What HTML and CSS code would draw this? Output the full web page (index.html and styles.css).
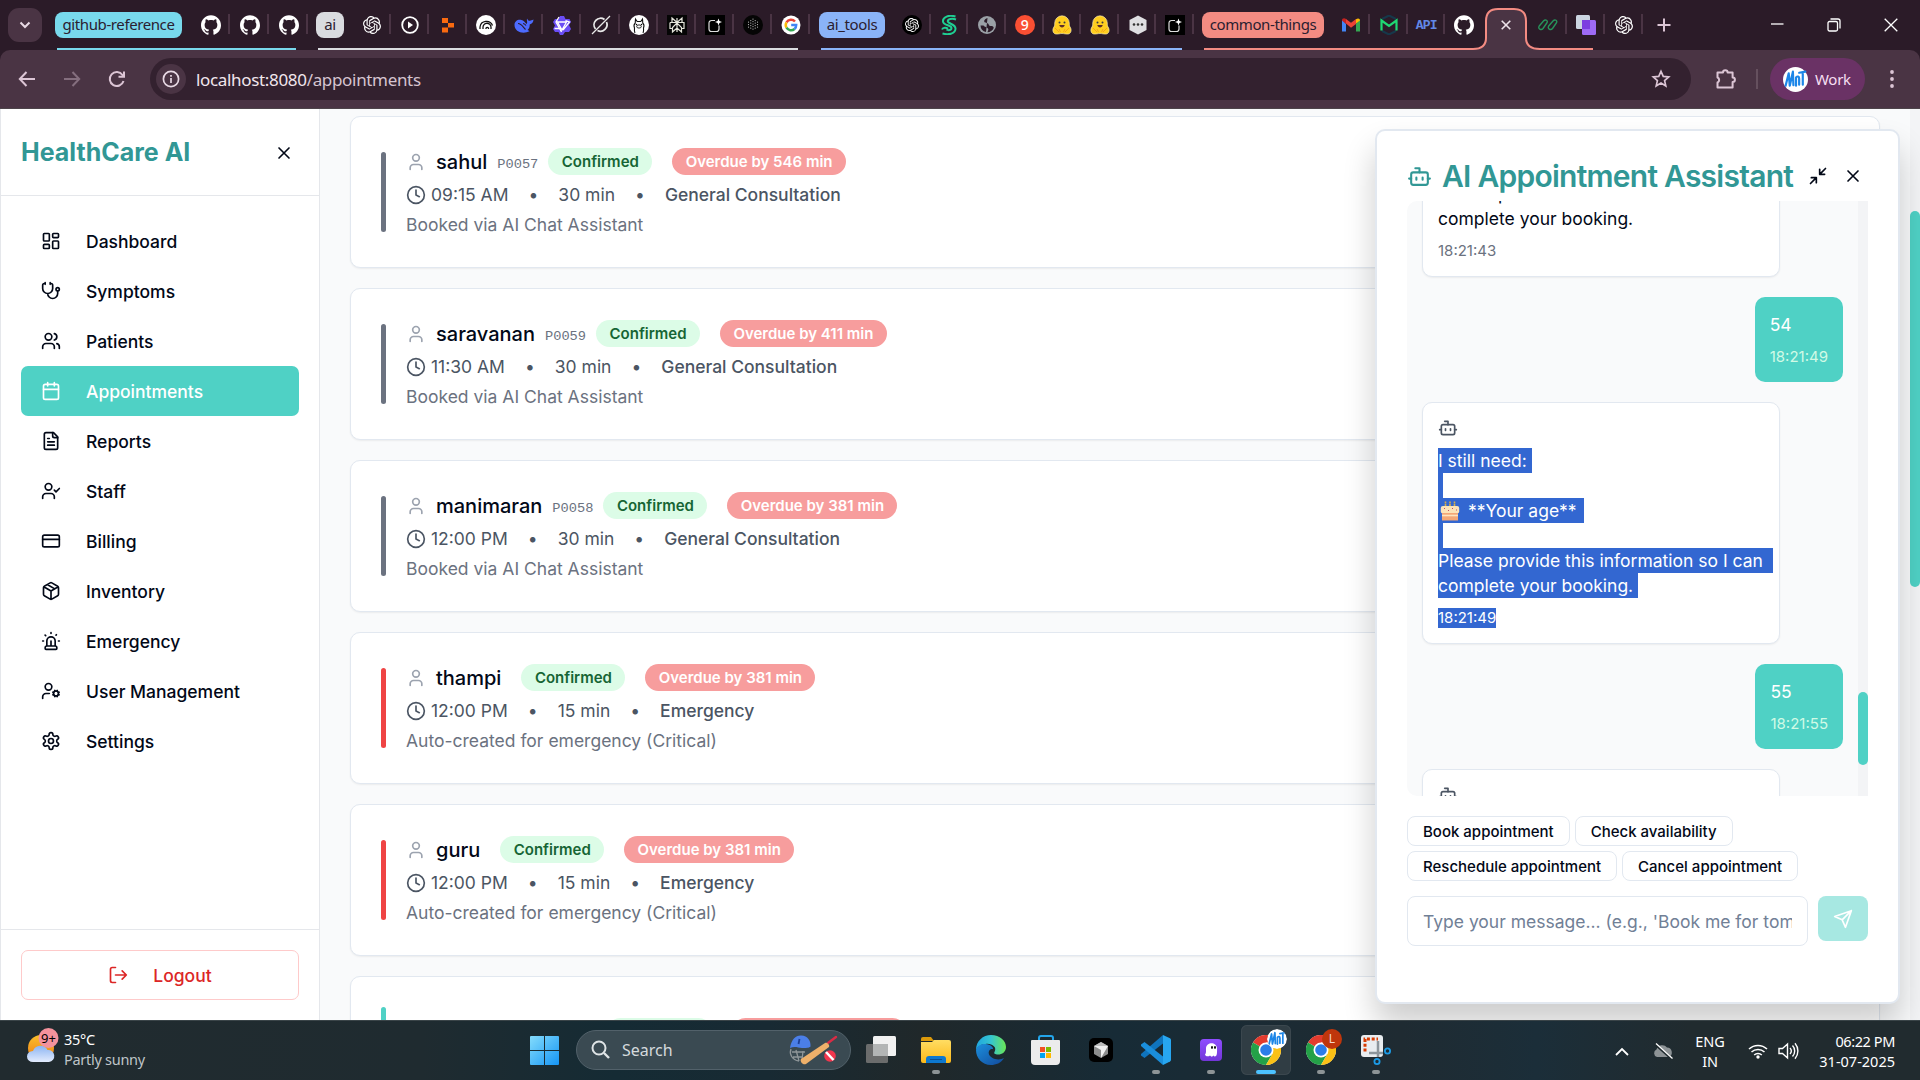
FILE: index.html
```html
<!DOCTYPE html>
<html lang="en">
<head>
<meta charset="utf-8">
<title>HealthCare AI - Appointments</title>
<link rel="stylesheet" href="styles.css">
</head>
<body>
<svg class="defs" width="0" height="0">
<defs>
<linearGradient id="gwin" x1="0" y1="0" x2="1" y2="1"><stop offset="0" stop-color="#84dcfc"/><stop offset="1" stop-color="#1595f5"/></linearGradient>
<linearGradient id="gfold" x1="0" y1="0" x2="0" y2="1"><stop offset="0" stop-color="#ffdd63"/><stop offset="1" stop-color="#fcb919"/></linearGradient>
<linearGradient id="gedge" x1="0" y1="0" x2="1" y2="0"><stop offset="0" stop-color="#1fa5df"/><stop offset=".5" stop-color="#35c5d0"/><stop offset="1" stop-color="#6be655"/></linearGradient>
<linearGradient id="gedge2" x1="0" y1="0" x2="1" y2="1"><stop offset="0" stop-color="#1c8fdc"/><stop offset="1" stop-color="#124a9c"/></linearGradient>
<linearGradient id="gsun" x1="0" y1="0" x2="0" y2="1"><stop offset="0" stop-color="#fbc02a"/><stop offset="1" stop-color="#ec7a17"/></linearGradient>
<linearGradient id="gcloud" x1="0" y1="0" x2="0" y2="1"><stop offset="0" stop-color="#8cb4f2"/><stop offset="1" stop-color="#e3ecfd"/></linearGradient>
<linearGradient id="gghost" x1="0" y1="0" x2="0" y2="1"><stop offset="0" stop-color="#8f4dff"/><stop offset="1" stop-color="#7236d8"/></linearGradient>
</defs>
<symbol id="github" viewBox="0 0 24 24"><path fill="currentColor" d="M12 .297c-6.63 0-12 5.373-12 12 0 5.303 3.438 9.8 8.205 11.385.6.113.82-.258.82-.577 0-.285-.01-1.04-.015-2.04-3.338.724-4.042-1.61-4.042-1.61C4.422 18.07 3.633 17.7 3.633 17.7c-1.087-.744.084-.729.084-.729 1.205.084 1.838 1.236 1.838 1.236 1.07 1.835 2.809 1.305 3.495.998.108-.776.417-1.305.76-1.605-2.665-.3-5.466-1.332-5.466-5.93 0-1.31.465-2.38 1.235-3.22-.135-.303-.54-1.523.105-3.176 0 0 1.005-.322 3.3 1.23.96-.267 1.98-.399 3-.405 1.02.006 2.04.138 3 .405 2.28-1.552 3.285-1.23 3.285-1.23.645 1.653.24 2.873.12 3.176.765.84 1.23 1.91 1.23 3.22 0 4.61-2.805 5.625-5.475 5.92.42.36.81 1.096.81 2.22 0 1.606-.015 2.896-.015 3.286 0 .315.21.69.825.57C20.565 22.092 24 17.592 24 12.297c0-6.627-5.373-12-12-12"/></symbol>
<symbol id="openai" viewBox="0 0 24 24"><path fill="currentColor" d="M22.2819 9.8211a5.9847 5.9847 0 0 0-.5157-4.9108 6.0462 6.0462 0 0 0-6.5098-2.9A6.0651 6.0651 0 0 0 4.9807 4.1818a5.9847 5.9847 0 0 0-3.9977 2.9 6.0462 6.0462 0 0 0 .7427 7.0966 5.98 5.98 0 0 0 .511 4.9107 6.051 6.051 0 0 0 6.5146 2.9001A5.9847 5.9847 0 0 0 13.2599 24a6.0557 6.0557 0 0 0 5.7718-4.2058 5.9894 5.9894 0 0 0 3.9977-2.9001 6.0557 6.0557 0 0 0-.7475-7.0729zm-9.022 12.6081a4.4755 4.4755 0 0 1-2.8764-1.0408l.1419-.0804 4.7783-2.7582a.7948.7948 0 0 0 .3927-.6813v-6.7369l2.02 1.1686a.071.071 0 0 1 .038.052v5.5826a4.504 4.504 0 0 1-4.4945 4.4944zm-9.6607-4.1254a4.4708 4.4708 0 0 1-.5346-3.0137l.142.0852 4.783 2.7582a.7712.7712 0 0 0 .7806 0l5.8428-3.3685v2.3324a.0804.0804 0 0 1-.0332.0615L9.74 19.9502a4.4992 4.4992 0 0 1-6.1408-1.6464zM2.3408 7.8956a4.485 4.485 0 0 1 2.3655-1.9728V11.6a.7664.7664 0 0 0 .3879.6765l5.8144 3.3543-2.0201 1.1685a.0757.0757 0 0 1-.071 0l-4.8303-2.7865A4.504 4.504 0 0 1 2.3408 7.872zm16.5963 3.8558L13.1038 8.364 15.1192 7.2a.0757.0757 0 0 1 .071 0l4.8303 2.7913a4.4944 4.4944 0 0 1-.6765 8.1042v-5.6772a.79.79 0 0 0-.407-.667zm2.0107-3.0231l-.142-.0852-4.7735-2.7818a.7759.7759 0 0 0-.7854 0L9.409 9.2297V6.8974a.0662.0662 0 0 1 .0284-.0615l4.8303-2.7866a4.4992 4.4992 0 0 1 6.6802 4.66zM8.3065 12.863l-2.02-1.1638a.0804.0804 0 0 1-.038-.0567V6.0742a4.4992 4.4992 0 0 1 7.3757-3.4537l-.142.0805L8.704 5.459a.7948.7948 0 0 0-.3927.6813zm1.0976-2.3654l2.602-1.4998 2.6069 1.4998v2.9994l-2.5974 1.4997-2.6067-1.4997Z"/></symbol>
<symbol id="spark" viewBox="0 0 20 20"><path d="M0 0h20v20H0z" fill="#000"/><path d="M10 5.500H6.500a2.500 2.500 0 0 0-2.500 2.500v6a2.500 2.500 0 0 0 2.500 2.500h5a2.500 2.500 0 0 0 2.500-2.500v-3.500" fill="none" stroke="#ddd" stroke-width="1.200"/><path d="M13.500 3.500l.9 2.600 2.600.9-2.600.9-.9 2.600-.9-2.600-2.600-.9 2.600-.9z" fill="#fff"/></symbol>
<symbol id="hug" viewBox="0 0 20 20"><path d="M10 .8a7.300 7.300 0 0 1 7.300 7.300c0 1.500 0 2.900.8 3.900 1.800 2.500 1.200 6.500-1.800 7-2 .4-4.300-.5-6.300-.5s-4.300.9-6.300.5c-3-.5-3.600-4.500-1.800-7 .8-1 .8-2.400.8-3.900A7.300 7.300 0 0 1 10 .8z" fill="#ffce1f" stroke="#fff3c4" stroke-width=".6"/><circle cx="7.500" cy="7.500" r="1" fill="#3a3b45"/><circle cx="12.500" cy="7.500" r="1" fill="#3a3b45"/><path d="M7.300 10h5.400c-.3 3.300-5 3.300-5.400 0z" fill="#5c2d2a"/><path d="M3 13l4 4M17 13l-4 4M7 14l1.500 3M13 14l-1.500 3" stroke="#f09a1a" stroke-width=".8"/></symbol>
<symbol id="x" viewBox="0 0 24 24"><path d="M18 6 6 18M6 6l12 12"/></symbol>
<symbol id="user" viewBox="0 0 24 24"><path d="M19 21v-2a4 4 0 0 0-4-4H9a4 4 0 0 0-4 4v2"/><circle cx="12" cy="7" r="4"/></symbol>
<symbol id="clock" viewBox="0 0 24 24"><circle cx="12" cy="12" r="10"/><path d="M12 6v6l4 2"/></symbol>
<symbol id="bot" viewBox="0 0 24 24"><path d="M12 8V4H8"/><rect width="16" height="12" x="4" y="8" rx="2"/><path d="M2 14h2M20 14h2M15 13v2M9 13v2"/></symbol>
<symbol id="chrome" viewBox="0 0 30 30"><circle cx="15" cy="15" r="15" fill="#fff"/><path d="M15 15L2 7.500A15 15 0 0 1 28 7.500H15z" fill="#e33b2e"/><path d="M2 7.500A15 15 0 0 0 15 30l6.500-11.200L15 15z" fill="#24a148"/><path d="M28 7.500A15 15 0 0 1 15 30l6.500-11.200V7.500z" fill="#fbc116"/><circle cx="15" cy="15" r="7.500" fill="#fff"/><circle cx="15" cy="15" r="5.800" fill="#2b7de9"/></symbol>
<symbol id="mnt" viewBox="0 0 24 24"><circle cx="12" cy="12" r="12" fill="#fff"/><path d="M2.500 18L5.500 6l1 12L9.500 4.500l.5 13M12.500 18v-8c1.500-1.500 3-1 3 1v6M15.500 5.500l6-1M19 5v12" fill="none" stroke="#1c86e8" stroke-width="2.100" stroke-linecap="round" stroke-linejoin="round"/></symbol>
</svg>

<header class="browser">
  <div class="tabstrip">
    <button class="tabsearch"><svg width="12" height="8" viewBox="0 0 12 8"><path d="M1.500 1.500L6 6l4.500-4.500" fill="none" stroke="currentColor" stroke-width="2"/></svg></button>
    <div class="group g-cyan">
      <span class="label">github-reference</span>
      <div class="tabs">
        <i class="tab"><svg class="fav"><use href="#github"/></svg></i>
        <i class="tab"><svg class="fav"><use href="#github"/></svg></i>
        <i class="tab"><svg class="fav"><use href="#github"/></svg></i>
      </div>
    </div>
    <div class="group g-grey">
      <span class="label">ai</span>
      <div class="tabs">
        <i class="tab"><svg class="fav sm"><use href="#openai"/></svg></i>
        <i class="tab"><svg class="fav" viewBox="0 0 20 20"><circle cx="10" cy="10" r="7.800" fill="none" stroke="#fff" stroke-width="1.800"/><path d="M8 6.500v7l5-3.500z" fill="#fff"/></svg></i>
        <i class="tab"><svg class="fav" viewBox="0 0 20 20"><path d="M4 3h6v5H4zM10 8h6v4.500h-6zM4 12.500h6v5H4z" fill="#f96a10"/></svg></i>
        <i class="tab"><svg class="fav" viewBox="0 0 20 20"><circle cx="10" cy="10" r="10" fill="#fff"/><path d="M4 14v-2a6.500 6.500 0 0 1 12.500-1.500M7 14v-1.500a4 4 0 0 1 8-.5v2M10 14v-1a1.500 1.500 0 0 1 2.500 0v1" fill="none" stroke="#111" stroke-width="1.300"/></svg></i>
        <i class="tab"><svg class="fav" viewBox="0 0 20 20"><path d="M.5 10C.5 6 4 4 7.500 5c2 .6 3.500 2.200 5 4 1.500-1 0-3 .5-5.500 1 1.500 1.500 2.500 3 2.300.8-.1 2-.8 3.500-1.300 0 2.500-1.500 4.500-3.800 5 .1 2.500-.7 4.300-2.200 5.500.7.500 1.500.7 2 1.300C9 19.500.5 17 .5 10z" fill="#4d6bfe"/><path d="M4 8.500c3.500 0 5 3.500 7.500 6M9 8.500c1.500.3 2.300 1 3 2" stroke="#2b1b28" stroke-width="1.100" fill="none"/></svg></i>
        <i class="tab"><svg class="fav" viewBox="0 0 20 20"><path d="M8 1h4l1.500 3h4l1.500 3-2 3 2 4-2 3h-4l-2 3H8l-1.500-3H3l-2-3 2-3.500L1 7l2-3h3.500z" fill="#6a4df5"/><path d="M5.500 7h9l-4.500 8zM7 2L4 7l5.500 10M2.500 13.500H9M11 15l6.500-8-4-1.500" fill="none" stroke="#fff" stroke-width="1.300"/></svg></i>
        <i class="tab"><svg class="fav" viewBox="0 0 20 20"><path d="M13.500 4.500A6.600 6.600 0 0 0 4.500 14M6.500 15.500A6.600 6.600 0 0 0 15.500 7" fill="none" stroke="#e8e8e8" stroke-width="1.800"/><path d="M1 19L19 1" stroke="#e8e8e8" stroke-width="1.300"/></svg></i>
        <i class="tab"><svg class="fav" viewBox="0 0 20 20"><circle cx="10" cy="10" r="10" fill="#fff"/><path d="M6 18c-1-2-.5-3.500-.5-5-.8-2-.3-4 .7-4.800L6.500 4l1.700 2.500h3.600L13.500 4l.3 4.200c1 .8 1.500 2.800.7 4.800 0 1.500.5 3-.5 5" fill="#fff" stroke="#111" stroke-width="1.100"/><ellipse cx="10" cy="11.500" rx="2.300" ry="1.600" fill="none" stroke="#111" stroke-width=".9"/><circle cx="7.500" cy="9.500" r=".7"/><circle cx="12.500" cy="9.500" r=".7"/></svg></i>
        <i class="tab"><svg class="fav" viewBox="0 0 20 20"><path d="M0 0h20v20H0z" fill="#050505"/><path d="M10 3v14M5 3l5 4.500L15 3v4.500H5zM3 7.500h14v6h-2.500M3 7.500v6h2.500M10 8l-4.500 4.500V17L10 13l4.500 4V12.500z" fill="none" stroke="#e6e6dc" stroke-width="1.200"/></svg></i>
        <i class="tab"><svg class="fav"><use href="#spark"/></svg></i>
        <i class="tab"><svg class="fav" viewBox="0 0 20 20"><circle cx="10" cy="10" r="10" fill="#050505"/><path d="M5.500 7v7M7.800 5.500v10M10 4v12.500M12.200 5.500v10M14.500 7v7" stroke="#c4c4c4" stroke-width="1.200" stroke-linecap="round" stroke-dasharray=".1 2.400"/></svg></i>
        <i class="tab"><svg class="fav" viewBox="0 0 20 20"><circle cx="10" cy="10" r="9.500" fill="#fff"/><g fill="none" stroke-width="2.500"><path d="M14 6.500A5.300 5.300 0 0 0 5.500 7.300" stroke="#ea4335"/><path d="M5.500 7.300a5.300 5.300 0 0 0 0 5.400" stroke="#fbbc05"/><path d="M5.500 12.700a5.300 5.300 0 0 0 8 1.300" stroke="#34a853"/><path d="M13.500 14c1.200-1.100 1.700-2.300 1.700-4H10.200" stroke="#4285f4"/></g></svg></i>
      </div>
    </div>
    <div class="group g-blue">
      <span class="label">ai_tools</span>
      <div class="tabs">
        <i class="tab"><svg class="fav" viewBox="0 0 20 20"><circle cx="10" cy="10" r="10" fill="#000"/><svg x="3" y="3" width="14" height="14"><use href="#openai"/></svg></svg></i>
        <i class="tab"><svg class="fav" viewBox="0 0 20 20"><path d="M16.500 1.500C10-.5 3.500 2 4 6.500c.5 4.500 8.500 3 8.500 6.500 0 2.500-3.500 2.500-5 1.500M17 4.500C13 3 8.500 4 8.800 6.500c.4 2.500 8.200 2.500 7.700 7.500C16 19 9 20 3.500 18.500M3 14.500c1-2.500 4.500-2 6-.8" fill="none" stroke="#1fcf93" stroke-width="2"/></svg></i>
        <i class="tab"><svg class="fav" viewBox="0 0 20 20"><circle cx="10" cy="10" r="9" fill="#9aa0a6"/><path d="M10.500 3c-2 .5-4 2.500-3 4 .8 1.300 4 .6 4.200 2.500.1 1.500 1.300 1.500 3 1.500 1.500 0 2 1 2 2-1 2.500-3.500 4.300-6.200 4.300 0-1.500 1.500-2.300.5-3.800-1-1.300-3.500-1.500-4.500-3H3.500A7 7 0 0 0 9 17" fill="#2b1b28"/></svg></i>
        <i class="tab nine"><b>9</b></i>
        <i class="tab"><svg class="fav"><use href="#hug"/></svg></i>
        <i class="tab"><svg class="fav"><use href="#hug"/></svg></i>
        <i class="tab"><svg class="fav" viewBox="0 0 20 20"><path d="M10 .5L18.500 5v10L10 19.500 1.500 15V5z" fill="#dfdfe2"/><circle cx="6" cy="9.500" r="1.300" fill="#333"/><circle cx="10" cy="9.500" r="1.300" fill="#333"/><circle cx="14" cy="9.500" r="1.300" fill="#333"/></svg></i>
        <i class="tab"><svg class="fav"><use href="#spark"/></svg></i>
      </div>
    </div>
    <div class="group g-red">
      <span class="label">common-things</span>
      <div class="tabs">
        <i class="tab"><svg class="fav" viewBox="0 0 20 20"><path d="M1 4.500v12h4V8.500z" fill="#4285f4"/><path d="M19 4.500v12h-4V8.500z" fill="#34a853"/><path d="M15 8.500V4.300c2-1.600 4-.8 4 1.200z" fill="#fbbc04"/><path d="M5 8.500V4l5 3.800L15 4v5l-5 3.800z" fill="#ea4335"/><path d="M1 5.500c0-2 2-2.800 4-1.500v5z" fill="#c5221f"/></svg></i>
        <i class="tab"><svg class="fav" viewBox="0 0 20 20"><path d="M3 4l7-3.500L17 4M3 16l7 3.500L17 16" fill="none" stroke="#16384a" stroke-width="2"/><path d="M2.500 15.500v-10l7.500 5.500 7.500-5.500v10" fill="none" stroke="#1fd873" stroke-width="2.200"/></svg></i>
        <i class="tab api">API</i>
        <i class="tab nosep"><svg class="fav"><use href="#github"/></svg></i>
      </div>
      <div class="active-tab">
        <svg class="shape" width="68" height="42" viewBox="0 0 68 42"><path d="M0 42V41Q13 41 13 30V13Q13 1 25 1H41Q53 1 53 13V30Q53 41 67 41V42z" fill="#4a3444"/><path d="M0 41Q13 41 13 30V13Q13 1 25 1H41Q53 1 53 13V30Q53 41 67 41" fill="none" stroke="#f38b82" stroke-width="2"/></svg>
        <svg width="10" height="10" viewBox="0 0 10 10"><path d="M.7.7l8.600 8.600M9.300.7L.7 9.300" stroke="#eee3ea" stroke-width="1.600"/></svg>
      </div>
      <div class="tabs">
        <i class="tab"><svg class="fav" viewBox="0 0 20 20"><path d="M1.200 11L5.500 6c2-2.200 5-.5 3.300 2L5 13.500c-1.800 2.300-5.500.3-3.800-2.500zM10.700 11L15 6c2-2.200 5-.5 3.300 2l-3.800 5.500c-1.800 2.300-5.500.3-3.800-2.500z" fill="none" stroke="#27935a" stroke-width="1.400"/></svg></i>
        <i class="tab"><svg class="fav" viewBox="0 0 20 20"><rect width="14" height="14" rx="1.500" fill="#cbd5e1"/><rect x="6" y="5" width="14" height="15" rx="1.500" fill="#9d6bf5"/><path d="M6 5h8v9H6z" fill="#7c3fe0"/></svg></i>
        <i class="tab"><svg class="fav sm"><use href="#openai"/></svg></i>
      </div>
    </div>
    <svg class="newtab" width="14" height="14" viewBox="0 0 14 14"><path d="M7 .5v13M.5 7h13" stroke="#dcc5d5" stroke-width="2"/></svg>
    <div class="winctl">
      <svg width="14" height="14" viewBox="0 0 14 14"><path d="M1 6h12.500"/></svg>
      <svg width="14" height="14" viewBox="0 0 14 14"><rect x="1" y="3.500" width="9.500" height="9.500" rx="1.500"/><path d="M3.500 1H11a2 2 0 0 1 2 2v7.500"/></svg>
      <svg width="14" height="14" viewBox="0 0 14 14"><path d="M.7 .7l12.600 12.600M13.300.7L.7 13.300"/></svg>
    </div>
  </div>
  <div class="toolbar">
    <div class="navbtns">
      <svg width="18" height="16" viewBox="0 0 18 16"><path d="M17 8H2M8.500 1L1.800 8l6.700 7"/></svg>
      <svg class="dim" width="18" height="16" viewBox="0 0 18 16"><path d="M1 8h15M9.500 1l6.700 7-6.700 7"/></svg>
      <svg width="18" height="18" viewBox="0 0 18 18"><path d="M15.500 11A7 7 0 1 1 14.500 5l1.500 1.500M16 1.500v5.300h-5.500"/></svg>
    </div>
    <div class="omnibox">
      <span class="info"><svg width="18" height="18" viewBox="0 0 18 18"><circle cx="9" cy="9" r="7.600" fill="none" stroke="#e8d9e4" stroke-width="1.700"/><path d="M9 8v5M9 5v1.700" stroke="#e8d9e4" stroke-width="1.700"/></svg></span>
      <span class="url">localhost:8080<em>/appointments</em></span>
      <svg class="star" width="20" height="20" viewBox="0 0 24 24"><path d="M12 2.800l2.700 6.100 6.600.6-5 4.400 1.500 6.500-5.800-3.500-5.800 3.500 1.500-6.500-5-4.400 6.600-.6z" fill="none" stroke="#dcc5d5" stroke-width="2"/></svg>
    </div>
    <svg class="ext" width="22" height="22" viewBox="0 0 22 22"><path d="M2.500 4.500h5.500a2.300 2.300 0 0 1 4.600 0h5v5a2.300 2.300 0 0 1 0 4.600v5.400H2.500v-5a2.700 2.700 0 0 0 0-5z" fill="none" stroke="#dcc5d5" stroke-width="2" stroke-linejoin="round"/></svg>
    <span class="tsep"></span>
    <span class="profile"><svg width="25" height="25"><use href="#mnt"/></svg>Work</span>
    <svg class="kebab" width="4" height="18" viewBox="0 0 4 18"><circle cx="2" cy="2" r="1.900"/><circle cx="2" cy="9" r="1.900"/><circle cx="2" cy="16" r="1.900"/></svg>
  </div>
</header>

<div class="page">
  <aside class="sidebar">
    <div class="brand"><h1>HealthCare AI</h1><svg class="ic"><use href="#x"/></svg></div>
    <nav class="nav">
      <a><svg class="ic" viewBox="0 0 24 24"><rect width="7" height="9" x="3" y="3" rx="1"/><rect width="7" height="5" x="14" y="3" rx="1"/><rect width="7" height="9" x="14" y="12" rx="1"/><rect width="7" height="5" x="3" y="16" rx="1"/></svg>Dashboard</a>
      <a><svg class="ic" viewBox="0 0 24 24"><path d="M11 2v2M5 2v2M5 3H4a2 2 0 0 0-2 2v4a6 6 0 0 0 12 0V5a2 2 0 0 0-2-2h-1M8 15a6 6 0 0 0 12 0v-3"/><circle cx="20" cy="10" r="2"/></svg>Symptoms</a>
      <a><svg class="ic" viewBox="0 0 24 24"><path d="M16 21v-2a4 4 0 0 0-4-4H6a4 4 0 0 0-4 4v2M22 21v-2a4 4 0 0 0-3-3.870M16 3.130a4 4 0 0 1 0 7.750"/><circle cx="9" cy="7" r="4"/></svg>Patients</a>
      <a class="on"><svg class="ic" viewBox="0 0 24 24"><path d="M8 2v4M16 2v4M3 10h18"/><rect width="18" height="18" x="3" y="4" rx="2"/></svg>Appointments</a>
      <a><svg class="ic" viewBox="0 0 24 24"><path d="M15 2H6a2 2 0 0 0-2 2v16a2 2 0 0 0 2 2h12a2 2 0 0 0 2-2V7Z"/><path d="M14 2v4a2 2 0 0 0 2 2h4M10 9H8M16 13H8M16 17H8"/></svg>Reports</a>
      <a><svg class="ic" viewBox="0 0 24 24"><path d="m16 11 2 2 4-4M16 21v-2a4 4 0 0 0-4-4H6a4 4 0 0 0-4 4v2"/><circle cx="9" cy="7" r="4"/></svg>Staff</a>
      <a><svg class="ic" viewBox="0 0 24 24"><rect width="20" height="14" x="2" y="5" rx="2"/><path d="M2 10h20"/></svg>Billing</a>
      <a><svg class="ic" viewBox="0 0 24 24"><path d="M11 21.730a2 2 0 0 0 2 0l7-4A2 2 0 0 0 21 16V8a2 2 0 0 0-1-1.730l-7-4a2 2 0 0 0-2 0l-7 4A2 2 0 0 0 3 8v8a2 2 0 0 0 1 1.730zM12 22V12M3.300 7 12 12l8.700-5M7.500 4.270l9 5.150"/></svg>Inventory</a>
      <a><svg class="ic" viewBox="0 0 24 24"><path d="M7 18v-6a5 5 0 1 1 10 0v6M5 21a1 1 0 0 0 1 1h12a1 1 0 0 0 1-1v-1a2 2 0 0 0-2-2H7a2 2 0 0 0-2 2zM21 12h1M18.500 4.500 18 5M2 12h1M12 2v1M4.929 4.929l.707.707M12 12v6"/></svg>Emergency</a>
      <a><svg class="ic" viewBox="0 0 24 24"><path d="M10 15H6a4 4 0 0 0-4 4v2"/><circle cx="9" cy="7" r="4"/><circle cx="18" cy="15" r="3"/><path d="m14.305 16.530.923-.382M15.228 13.852l-.923-.383M16.852 12.228l-.383-.923M16.852 17.772l-.383.924M19.148 12.228l.383-.923M19.530 18.696l-.382-.924M20.772 13.852l.924-.383M20.772 16.148l.924.383"/></svg>User Management</a>
      <a><svg class="ic" viewBox="0 0 24 24"><path d="M12.220 2h-.44a2 2 0 0 0-2 2v.18a2 2 0 0 1-1 1.730l-.43.250a2 2 0 0 1-2 0l-.15-.08a2 2 0 0 0-2.730.730l-.22.380a2 2 0 0 0 .73 2.730l.15.100a2 2 0 0 1 1 1.720v.51a2 2 0 0 1-1 1.740l-.15.090a2 2 0 0 0-.73 2.730l.22.380a2 2 0 0 0 2.730.730l.15-.08a2 2 0 0 1 2 0l.43.250a2 2 0 0 1 1 1.730V20a2 2 0 0 0 2 2h.44a2 2 0 0 0 2-2v-.18a2 2 0 0 1 1-1.730l.43-.25a2 2 0 0 1 2 0l.15.080a2 2 0 0 0 2.730-.73l.22-.39a2 2 0 0 0-.73-2.730l-.15-.08a2 2 0 0 1-1-1.740v-.5a2 2 0 0 1 1-1.740l.15-.09a2 2 0 0 0 .73-2.730l-.22-.38a2 2 0 0 0-2.730-.73l-.15.080a2 2 0 0 1-2 0l-.43-.25a2 2 0 0 1-1-1.730V4a2 2 0 0 0-2-2z"/><circle cx="12" cy="12" r="3"/></svg>Settings</a>
    </nav>
    <div class="foot"><button class="logout"><svg class="ic" viewBox="0 0 24 24"><path d="m17 17 5-5-5-5M22 12H9M9 21H5a2 2 0 0 1-2-2V5a2 2 0 0 1 2-2h4"/></svg>Logout</button></div>
  </aside>

  <main class="list">
    <article class="card"><span class="bar"></span><div class="body">
      <div class="r1"><svg class="ic who"><use href="#user"/></svg><b class="name">sahul</b><code>P0057</code><span class="pill ok">Confirmed</span><span class="pill late">Overdue by 546 min</span></div>
      <div class="r2"><svg class="ic"><use href="#clock"/></svg><span>09:15 AM</span><span>•</span><span>30 min</span><span>•</span><span class="kind">General Consultation</span></div>
      <div class="r3">Booked via AI Chat Assistant</div></div></article>
    <article class="card"><span class="bar"></span><div class="body">
      <div class="r1"><svg class="ic who"><use href="#user"/></svg><b class="name">saravanan</b><code>P0059</code><span class="pill ok">Confirmed</span><span class="pill late">Overdue by 411 min</span></div>
      <div class="r2"><svg class="ic"><use href="#clock"/></svg><span>11:30 AM</span><span>•</span><span>30 min</span><span>•</span><span class="kind">General Consultation</span></div>
      <div class="r3">Booked via AI Chat Assistant</div></div></article>
    <article class="card"><span class="bar"></span><div class="body">
      <div class="r1"><svg class="ic who"><use href="#user"/></svg><b class="name">manimaran</b><code>P0058</code><span class="pill ok">Confirmed</span><span class="pill late">Overdue by 381 min</span></div>
      <div class="r2"><svg class="ic"><use href="#clock"/></svg><span>12:00 PM</span><span>•</span><span>30 min</span><span>•</span><span class="kind">General Consultation</span></div>
      <div class="r3">Booked via AI Chat Assistant</div></div></article>
    <article class="card"><span class="bar red"></span><div class="body">
      <div class="r1"><svg class="ic who"><use href="#user"/></svg><b class="name">thampi</b><code></code><span class="pill ok">Confirmed</span><span class="pill late">Overdue by 381 min</span></div>
      <div class="r2"><svg class="ic"><use href="#clock"/></svg><span>12:00 PM</span><span>•</span><span>15 min</span><span>•</span><span class="kind">Emergency</span></div>
      <div class="r3">Auto-created for emergency (Critical)</div></div></article>
    <article class="card"><span class="bar red"></span><div class="body">
      <div class="r1"><svg class="ic who"><use href="#user"/></svg><b class="name">guru</b><code></code><span class="pill ok">Confirmed</span><span class="pill late">Overdue by 381 min</span></div>
      <div class="r2"><svg class="ic"><use href="#clock"/></svg><span>12:00 PM</span><span>•</span><span>15 min</span><span>•</span><span class="kind">Emergency</span></div>
      <div class="r3">Auto-created for emergency (Critical)</div></div></article>
    <article class="card partial"><span class="bar teal"></span><div class="body">
      <div class="r1"><span class="lead"></span><span class="pill ok"></span><span class="pill late"></span></div></div></article>
  </main>
  <div class="scroll"><span></span></div>

  <section class="chat">
    <header><svg class="ic"><use href="#bot"/></svg><h2>AI Appointment Assistant</h2>
      <svg class="ic s" viewBox="0 0 24 24"><path d="M3 21l7-7M21 3l-7 7M4 14h6v6M14 4v6h6"/></svg>
      <svg class="ic s last"><use href="#x"/></svg></header>
    <div class="log">
      <div class="msgs">
        <div class="bot first"><p>Please provide this information so I can</p><p>complete your booking.</p><time>18:21:43</time></div>
        <div class="me"><p>54</p><time>18:21:49</time></div>
        <div class="bot"><svg class="ic"><use href="#bot"/></svg>
          <p><mark>I still need:</mark></p><p><mark></mark></p>
          <p><mark><svg class="cake" width="20" height="20" viewBox="0 0 20 20"><path d="M5.500 .5v5M10 .5v5M14.500 .5v5" stroke="#d9b04a" stroke-width="1.600" stroke-dasharray="2 .6"/><rect x=".8" y="5" width="18.400" height="7.500" rx="2" fill="#fbe3b8"/><path d="M2 12h16v7.500H2z" fill="#f3a777"/><path d="M2 14.500h16" stroke="#fde3c0" stroke-width="1.600"/><path d="M4 7.500h1M8 9.500h1M12 7.500h1M16 9h1" stroke="#c44f63" stroke-width="1.200"/></svg> **Your age**</mark></p>
          <p><mark></mark></p>
          <p><mark class="wide">Please provide this information so I can</mark></p><p><mark>complete your booking.</mark></p>
          <time><mark class="tight">18:21:49</mark></time></div>
        <div class="me"><p>55</p><time>18:21:55</time></div>
        <div class="bot"><svg class="ic"><use href="#bot"/></svg></div>
      </div>
      <div class="track"><span></span></div>
    </div>
    <div class="chips"><button>Book appointment</button><button>Check availability</button><button>Reschedule appointment</button><button>Cancel appointment</button></div>
    <div class="compose"><div class="field"><span>Type your message... (e.g., 'Book me for tomorrow')</span></div>
      <button class="send"><svg class="ic" viewBox="0 0 24 24"><path d="m22 2-7 20-4-9-9-4ZM22 2 11 13"/></svg></button></div>
  </section>
</div>

<footer class="taskbar">
  <div class="weather">
    <svg width="36" height="38" viewBox="0 0 36 38"><circle cx="17" cy="20" r="13" fill="url(#gsun)"/><path d="M9 34a6 5.500 0 0 1 0-11 8 8 0 0 1 14.500-1A6 6 0 0 1 25 34z" fill="url(#gcloud)"/><circle cx="24.500" cy="10" r="10" fill="#f4929c"/><text x="17" y="15" font-size="13" font-family="Noto Sans, sans-serif">9+</text></svg>
    <div><b>35°C</b><span>Partly sunny</span></div>
  </div>
  <div class="dock">
    <span class="app"><svg width="29" height="29" viewBox="0 0 29 29"><path d="M0 1a1 1 0 0 1 1-1h13v14H0zM15 0h13a1 1 0 0 1 1 1v13H15zM0 15h14v14H1a1 1 0 0 1-1-1zM15 15h14v13a1 1 0 0 1-1 1H15z" fill="url(#gwin)"/></svg></span>
    <div class="search"><svg width="20" height="20" viewBox="0 0 20 20"><circle cx="8" cy="8" r="6.500" fill="none" stroke="#dfe4e6" stroke-width="2"/><path d="M13 13l5 5" stroke="#dfe4e6" stroke-width="2.400"/></svg><span>Search</span>
      <svg width="50" height="32" viewBox="0 0 50 32"><path d="M3 15c-2 5 1 11 8 12M4 18h13M8 16l3 11M15 17l-1 9M5 23h10" stroke="#8f9699" fill="none" stroke-width="1.300"/><path d="M2 14C3.500 5 8 1 13.500 1.500c6 .5 9.500 5 9 11-1 1.500-5 1.500-8.500 1.500-4-.5-8-2-12 0z" fill="#4b7fe8"/><path d="M11.500 5l-1 5" stroke="#1b3f96" stroke-width="1.800"/><path d="M40 9l8-6" stroke="#d92c45" stroke-width="2.400" stroke-linecap="round"/><path d="M13 25L37 9c2-1 5 2 4 4L18 30c-3 1.500-6.500-2.500-5-5z" fill="#eeb06a"/><circle cx="42" cy="22" r="5.800" fill="#f2364d"/><path d="M38 18l7.500 8" stroke="#fff" stroke-width="2.500"/></svg></div>
    <span class="app"><svg width="30" height="28" viewBox="0 0 30 28"><rect y="8" width="22" height="19" rx="1.500" fill="#6b6c6c"/><rect x="7" width="23" height="20" rx="1.500" fill="#f1f1f1"/><path d="M7 8h15v12H7z" fill="#b3b5b5"/></svg></span>
    <span class="app run"><svg width="30" height="27" viewBox="0 0 30 27"><path d="M0 2a2 2 0 0 1 2-2h8l3 4H0z" fill="#dc9a0b"/><path d="M0 5h11l2-2h15a2 2 0 0 1 2 2v19a2 2 0 0 1-2 2H2a2 2 0 0 1-2-2z" fill="url(#gfold)"/><path d="M5 26v-4a3 3 0 0 1 3-3h14a3 3 0 0 1 3 3v4z" fill="#0d78cf"/><path d="M9 22.500h12" stroke="#0a4f93"/></svg></span>
    <span class="app"><svg width="30" height="30" viewBox="0 0 30 30"><path d="M15 0c9 0 15 6 15 12 0 5-4 7.500-8 7.500-3 0-4.500-1-3.500-2.500 3-5-3-9-9-8C5 9 1.500 12 0 15 0 6 7 0 15 0z" fill="url(#gedge)"/><path d="M0 15c1-4 5-6.500 9.500-6 5 .500 8 3 7.500 5-5-1-7 7 2 10 4 1 7 0 9-1-3 5-8 7-13 7C6 30 0 23 0 15z" fill="url(#gedge2)"/></svg></span>
    <span class="app"><svg width="30" height="30" viewBox="0 0 30 30"><path d="M8 6V3a2 2 0 0 1 2-2h10a2 2 0 0 1 2 2v3" fill="none" stroke="#23a5ea" stroke-width="2"/><path d="M0 6a1 1 0 0 1 1-1h27a1 1 0 0 1 1 1v20a4 4 0 0 1-4 4H4a4 4 0 0 1-4-4z" fill="#ececec"/><path d="M9 12h5v5H9z" fill="#f25022"/><path d="M15 12h5v5h-5z" fill="#7fba00"/><path d="M9 18h5v5H9z" fill="#00a4ef"/><path d="M15 18h5v5h-5z" fill="#ffb900"/></svg></span>
    <span class="app"><svg width="24" height="24" viewBox="0 0 24 24"><rect width="24" height="24" rx="5" fill="#000"/><path d="M12 4l7 4v8l-7 4-7-4V8z" fill="#8c8c8c"/><path d="M5 8h14l-7 12v-8z" fill="#efefef"/><path d="M5 8l7-4 7 4z" fill="#bbb"/></svg></span>
    <span class="app run"><svg width="30" height="30" viewBox="0 0 30 30"><path d="M22 0v30l7-3.500a2 2 0 0 0 1-1.700V5a2 2 0 0 0-1-1.700z" fill="#27a6f0"/><path d="M22 0v8.500L3.500 23 0 20.500v-1.500z" fill="#0f74bd"/><path d="M22 30v-8.500L3.500 7 0 9.500V11z" fill="#1a8edb"/></svg></span>
    <span class="app run"><svg width="22" height="22" viewBox="0 0 22 22"><rect width="22" height="22" rx="4" fill="url(#gghost)"/><path d="M5 15.500c1.500-1.500.8-4 1-6.500.5-6.500 10.500-6.500 11 0 .2 4 0 7-1 8-1 .8-2 .5-2.500-.5-1 1.500-2.500 1.500-3.500 0-1.500 1.500-4.500 1-5-1z" fill="#fff"/><ellipse cx="12" cy="8.500" rx=".9" ry="1.400"/><ellipse cx="15" cy="8.500" rx=".9" ry="1.400"/></svg></span>
    <span class="app run cur"><svg width="30" height="30"><use href="#chrome"/></svg><svg class="badge" width="20" height="20"><use href="#mnt"/></svg></span>
    <span class="app run"><svg width="30" height="30"><use href="#chrome"/></svg><em class="badge">L</em></span>
    <span class="app run"><svg width="30" height="30" viewBox="0 0 30 30"><rect width="22" height="22" rx="3" fill="#e9edf0"/><path d="M4 16.500V4h13" fill="none" stroke="#d83b01" stroke-width="3" stroke-dasharray="3 1.800"/><path d="M17 6v16M8 18h14" stroke="#8d969c" stroke-width="2.500"/><circle cx="26.500" cy="16" r="2.600" fill="none" stroke="#1c9be6" stroke-width="1.800"/><circle cx="16" cy="26.500" r="2.600" fill="none" stroke="#1c9be6" stroke-width="1.800"/></svg></span>
  </div>
  <div class="tray">
    <svg class="t1" width="14" height="9" viewBox="0 0 14 9"><path d="M1 8l6-6 6 6" fill="none" stroke="#fff" stroke-width="1.800"/></svg>
    <svg class="t2" width="20" height="17" viewBox="0 0 20 17"><path d="M4 14a4 4 0 0 1-.5-7.500A6 6 0 0 1 14 4.500 5 5 0 0 1 16 14z" fill="#8d9396"/><path d="M2 1l17 15" stroke="#1f2a2e" stroke-width="2.500"/><path d="M3 .5l16.500 15" stroke="#fff" stroke-width="1.300"/></svg>
    <div class="lang">ENG<br>IN</div>
    <svg class="t3" width="20" height="16" viewBox="0 0 20 16"><g fill="none" stroke="#fff" stroke-width="1.500"><path d="M1 6a13 13 0 0 1 18 0M3.500 9a9.500 9.500 0 0 1 13 0M6.200 12a5.500 5.500 0 0 1 7.600 0"/></g><circle cx="10" cy="14" r="1.700" fill="#fff"/></svg>
    <svg class="t4" width="21" height="18" viewBox="0 0 21 18"><g fill="none" stroke="#fff" stroke-width="1.400"><path d="M1 6.500h3.500L9.500 2v14l-5-4.500H1zM12 6a4.500 4.500 0 0 1 0 6M14.500 3.500a8 8 0 0 1 0 11M17 1.200a12 12 0 0 1 0 15.600"/></g></svg>
    <div class="date">06:22 PM<br><span>31-07-2025</span></div>
  </div>
</footer>
</body>
</html>
```
FILE: styles.css
```css
* { box-sizing: border-box; }
body { margin: 0; width: 1920px; height: 1080px; overflow: hidden; display: flex; flex-direction: column; font-family: Inter, "Liberation Sans", sans-serif; background: #f9fafb; color: #020817; }
h1, h2, p { margin: 0; }
button { font: inherit; color: inherit; border: 0; background: none; padding: 0; }
svg { display: block; flex: none; }
.defs { position: absolute; }
i, em { font-style: normal; }
.ic { width: 20px; height: 20px; fill: none; stroke: currentColor; stroke-width: 2; stroke-linecap: round; stroke-linejoin: round; }

/* browser chrome */
.browser { flex: none; height: 109px; background: #2b1b28; font-family: "Noto Sans", sans-serif; }
.tabstrip { display: flex; height: 50px; align-items: flex-start; }
.tabsearch { width: 34px; height: 34px; margin: 8px 13px 0 8px; border-radius: 11px; background: #4a3444; color: #e8d9e4; display: grid; place-items: center; }
.group { display: flex; height: 50px; position: relative; color: #fff; }
.group::after { content: ""; position: absolute; left: 2px; right: 12px; bottom: 0; height: 2px; background: var(--c); }
.label { height: 26px; margin: 12px 9px 0 0; border-radius: 8px; background: var(--c); color: #2b2030; font-size: 15px; line-height: 25px; text-align: center; letter-spacing: -.4px; white-space: nowrap; }
.g-cyan { --c: #78d9ec; width: 253px; margin-right: 8px; }
.g-cyan .label { width: 127px; }
.g-grey { --c: #dadce0; width: 494px; margin-right: 9px; }
.g-grey .label { width: 28px; }
.g-blue { --c: #8ab4f8; width: 375px; margin-right: 8px; }
.g-blue .label { width: 66px; margin-right: 8px; }
.g-red { --c: #f38b82; width: 441px; }
.g-red .label { width: 122px; margin-right: 8px; }
.g-red::after { right: 50px; }
.tabs { display: flex; flex: 1; padding-top: 9px; }
.tab { flex: 1; height: 37px; display: flex; align-items: flex-start; justify-content: center; position: relative; padding-top: 6px; }
.tab::after { content: ""; position: absolute; right: 0; top: 5px; width: 2px; height: 20px; background: #4a3444; }
.tab.nosep::after { display: none; }
.fav { width: 20px; height: 20px; }
.fav.sm { width: 18px; height: 18px; margin-top: 1px; }
.nine b { width: 20px; height: 20px; border-radius: 50%; background: #fa4f33; font: 500 14px/20px "Noto Sans", sans-serif; text-align: center; }
.api { font: 700 13px/21px "Liberation Mono", monospace; color: #6288e6; letter-spacing: -.8px; }
.active-tab { width: 46px; flex: none; display: flex; justify-content: center; padding-top: 20px; position: relative; z-index: 1; }
.active-tab > svg:last-child { position: relative; }
.active-tab .shape { position: absolute; left: -10px; top: 8px; }
.g-red .tabs:nth-child(2) { flex: 0 0 151px; }
.g-red .tabs:last-child { flex: 1; }
.newtab { margin: 18px 0 0 14px; }
.winctl { margin: 18px 22px 0 auto; display: flex; gap: 43px; fill: none; stroke: #fff; stroke-width: 1.3; }
.toolbar { height: 59px; background: #4a3444; border-radius: 10px 10px 0 0; border-bottom: 1px solid #4d444a; display: flex; align-items: center; }
.navbtns { display: flex; gap: 27px; margin-left: 18px; width: 132px; align-items: center; fill: none; stroke: #dcc5d5; stroke-width: 2; }
.dim { opacity: .4; }
.omnibox { width: 1541px; height: 42px; border-radius: 21px; background: #33212f; display: flex; align-items: center; padding: 0 20px 0 6px; }
.info { width: 30px; height: 30px; border-radius: 50%; background: #4a3444; display: grid; place-items: center; }
.url { margin-left: 10px; color: #f1e6ed; font-size: 17px; letter-spacing: -.33px; flex: 1; }
.url em { color: #d6c4d0; }
.ext { margin-left: 24px; }
.tsep { width: 2px; height: 20px; background: #65505e; margin: 0 12px 0 19px; }
.profile { width: 95px; height: 42px; border-radius: 21px; background: #6a3265; color: #f6dff2; display: flex; align-items: center; gap: 7px; padding-left: 13px; font-size: 15px; letter-spacing: -.3px; }
.kebab { margin-left: 25px; fill: #dcc5d5; }

/* page */
.page { flex: 1; min-height: 0; display: flex; position: relative; overflow: hidden; }
.sidebar { width: 320px; flex: none; background: #fff; border: solid #e5e7eb; border-width: 0 1px; display: flex; flex-direction: column; }
.brand { height: 87px; border-bottom: 1px solid #e5e7eb; display: flex; justify-content: space-between; align-items: flex-start; padding: 28px 25px 0 20px; }
.brand h1 { font-size: 25px; line-height: 30px; font-weight: 700; color: #319795; }
.brand .ic { margin-top: 6px; }
.nav { flex: 1; padding: 20px 20px 0; }
.nav a { height: 50px; display: flex; align-items: center; gap: 25px; padding-left: 20px; font-size: 17.5px; font-weight: 500; border-radius: 7px; }
.nav .on { background: #4fd1c5; color: #fff; }
.foot { height: 91px; border-top: 1px solid #e5e7eb; padding: 20px; }
.logout { width: 100%; height: 50px; border: 1px solid #fecaca; border-radius: 7px; color: #dc2626; font-size: 17.5px; font-weight: 500; display: flex; align-items: center; justify-content: center; gap: 25px; }
.list { flex: 1; padding: 7px 30px 0; display: flex; flex-direction: column; gap: 20px; }
.card { flex: none; height: 152px; background: #fff; border: 1px solid #e2e8f0; border-radius: 10px; box-shadow: 0 1px 2px rgba(0,0,0,.06); padding: 31px 30px 0; display: flex; }
.bar { width: 5px; height: 80px; border-radius: 3px; background: #6b7280; margin: 4px 20px 0 0; }
.bar.red { background: #ef4444; }
.bar.teal { background: #4fd1c5; margin-top: -1px; }
.r1 { display: flex; align-items: center; height: 27px; gap: 10px; }
.who { color: #9ca3af; }
.name { font-size: 20px; font-weight: 500; }
code { font: 13.7px "Liberation Mono", monospace; color: #6b7280; padding-top: 5px; }
.pill { height: 27px; border-radius: 14px; padding: 0 13.5px; font-size: 15px; line-height: 27px; font-weight: 600; white-space: nowrap; }
.ok { background: #dcfce7; color: #166534; }
.late { background: #f79d9d; color: #fff; margin-left: 10px; padding: 0 13.3px; }
.r2 { display: flex; align-items: center; gap: 20px; height: 25px; margin-top: 7px; font-size: 17.5px; color: #4b5563; }
.r2 .ic { margin-right: -15px; }
.kind { font-weight: 500; }
.r3 { font-size: 17.5px; line-height: 25px; margin-top: 5px; color: #6b7280; }
.partial .r1 { margin-top: 10px; }
.partial .lead { width: 191px; }
.partial .ok { width: 105px; }
.partial .late { width: 174px; }
.scroll { width: 10px; background: #f3f4f6; padding-top: 102px; }
.scroll span { display: block; height: 376px; border-radius: 5px; background: #4fd1c5; }

/* chat window floating over the page */
.chat { position: absolute; left: 1375px; top: 20px; width: 525px; height: 875px; background: #fff; border: 2px solid #e2e8f0; border-radius: 10px; box-shadow: 0 20px 32px rgba(0,0,0,.2); padding: 0 30px; display: flex; flex-direction: column; }
.chat header { height: 70px; display: flex; align-items: center; padding-top: 20px; }
.chat header .ic { width: 25px; height: 25px; color: #319795; }
.chat h2 { font-size: 30px; font-weight: 600; letter-spacing: -.75px; color: #319795; margin: 0 15px 0 10px; white-space: nowrap; line-height: 36px; }
.chat header .s { width: 20px; height: 20px; color: #020817; }
.chat header .last { margin-left: 15px; }
.log { height: 595px; flex: none; overflow: hidden; background: #f9fafb; border-radius: 10px 0 0 10px; display: flex; }
.msgs { flex: 1; padding: 0 15px; display: flex; flex-direction: column; gap: 20px; align-items: flex-start; font-size: 17.5px; line-height: 25px; }
.msgs > div { border-radius: 10px; flex: none; }
.bot { width: 358px; padding: 15px; background: #fff; border: 1px solid #e2e8f0; box-shadow: 0 1px 2px rgba(0,0,0,.06); }
.first { margin-top: -36px; }
.bot .ic { color: #4b5563; margin-bottom: 10px; }
.bot p { height: 25px; white-space: nowrap; }
time { display: block; margin-top: 10px; font-size: 15px; line-height: 20px; color: #6b7280; }
.me { align-self: flex-end; background: #4fd1c5; color: #fff; padding: 15px; }
.me time { color: #d1fae5; }
mark { display: inline-block; height: 25px; vertical-align: top; background: #3367d1; color: #fff; padding-right: 5px; }
mark.wide { padding-right: 10px; }
mark.tight { height: 20px; padding: 0; }
.cake { display: inline-block; vertical-align: -4px; margin: 0 3px 0 2px; }
mark:has(.cake) { padding-right: 7px; }
.track { width: 10px; background: #f3f4f6; padding-top: 491px; }
.track span { display: block; height: 73px; border-radius: 5px; background: #4fd1c5; }
.chips { margin-top: 20px; display: flex; flex-wrap: wrap; gap: 5px; }
.chips button { height: 30px; border: 1px solid #e2e8f0; border-radius: 8px; padding: 0 15px; font-size: 15px; line-height: 27px; font-weight: 500; }
.compose { margin-top: 15px; display: flex; gap: 10px; align-items: flex-start; }
.field { flex: 1; min-width: 0; height: 50px; border: 1px solid #e2e8f0; border-radius: 8px; padding: 0 15px; font-size: 17.5px; line-height: 50px; color: #718096; }
.field span { display: block; overflow: hidden; white-space: nowrap; }
.send { width: 50px; height: 45px; border-radius: 8px; background: #a7e8e2; color: #fff; display: grid; place-items: center; }

/* taskbar */
.taskbar { flex: none; height: 60px; border-top: 1px solid #3a4448; background: linear-gradient(90deg, #212b2f 0, #1f2b30 22%, #152b34 32%, #182a33 40%, #20282a 48%, #172b36 58%, #1f2b32 73%, #1b2e39 80%, #212b2f 88%); display: flex; align-items: flex-start; color: #fff; font-family: "Noto Sans", sans-serif; }
.weather { width: 517px; padding: 7px 0 0 24px; display: flex; gap: 4px; font-size: 14.5px; line-height: 20px; }
.weather div { display: flex; flex-direction: column; padding-top: 1px; letter-spacing: -.28px; }
.weather b { font-weight: 400; }
.weather span { color: #bfc5c8; }
.dock { display: flex; padding-top: 4px; width: 896px; }
.app { width: 50px; height: 50px; margin-right: 5px; display: grid; place-items: center; position: relative; border-radius: 6px; }
.app:first-child { margin: 0 7px 0 2px; }
.app.run::after { content: ""; position: absolute; left: 21px; top: 45px; width: 8px; height: 4px; border-radius: 2px; background: #8d9496; }
.app.cur { background: #303d44; box-shadow: inset 0 0 0 1px #3b474e; }
.app.cur::after { left: 15px; width: 20px; background: #4cc2ff; }
.badge { position: absolute; right: 4px; top: 4px; width: 20px; height: 20px; border-radius: 50%; }
em.badge { background: #bf360c; font-size: 12px; line-height: 20px; text-align: center; color: #f5d6cb; }
.search { width: 275px; height: 40px; margin: 5px 5px 0 0; border-radius: 20px; background: #3a4a52; border: 1px solid #52616a; display: flex; align-items: center; padding: 0 12px 0 14px; font-size: 16px; color: #d5dadd; }
.search span { margin: 0 auto 0 11px; }
.tray { flex: 1; display: flex; height: 60px; align-items: center; font-size: 14.5px; line-height: 20px; letter-spacing: -.1px; padding-right: 25px; }
.t1 { margin-left: auto; }
.t2 { margin-left: 24px; }
.lang { width: 34px; margin-left: 20px; text-align: center; }
.t3 { margin-left: 21px; }
.t4 { margin-left: 10px; }
.date { margin-left: 17px; text-align: right; width: 79px; white-space: nowrap; letter-spacing: -.4px; }
.date span { letter-spacing: 0; }
```
